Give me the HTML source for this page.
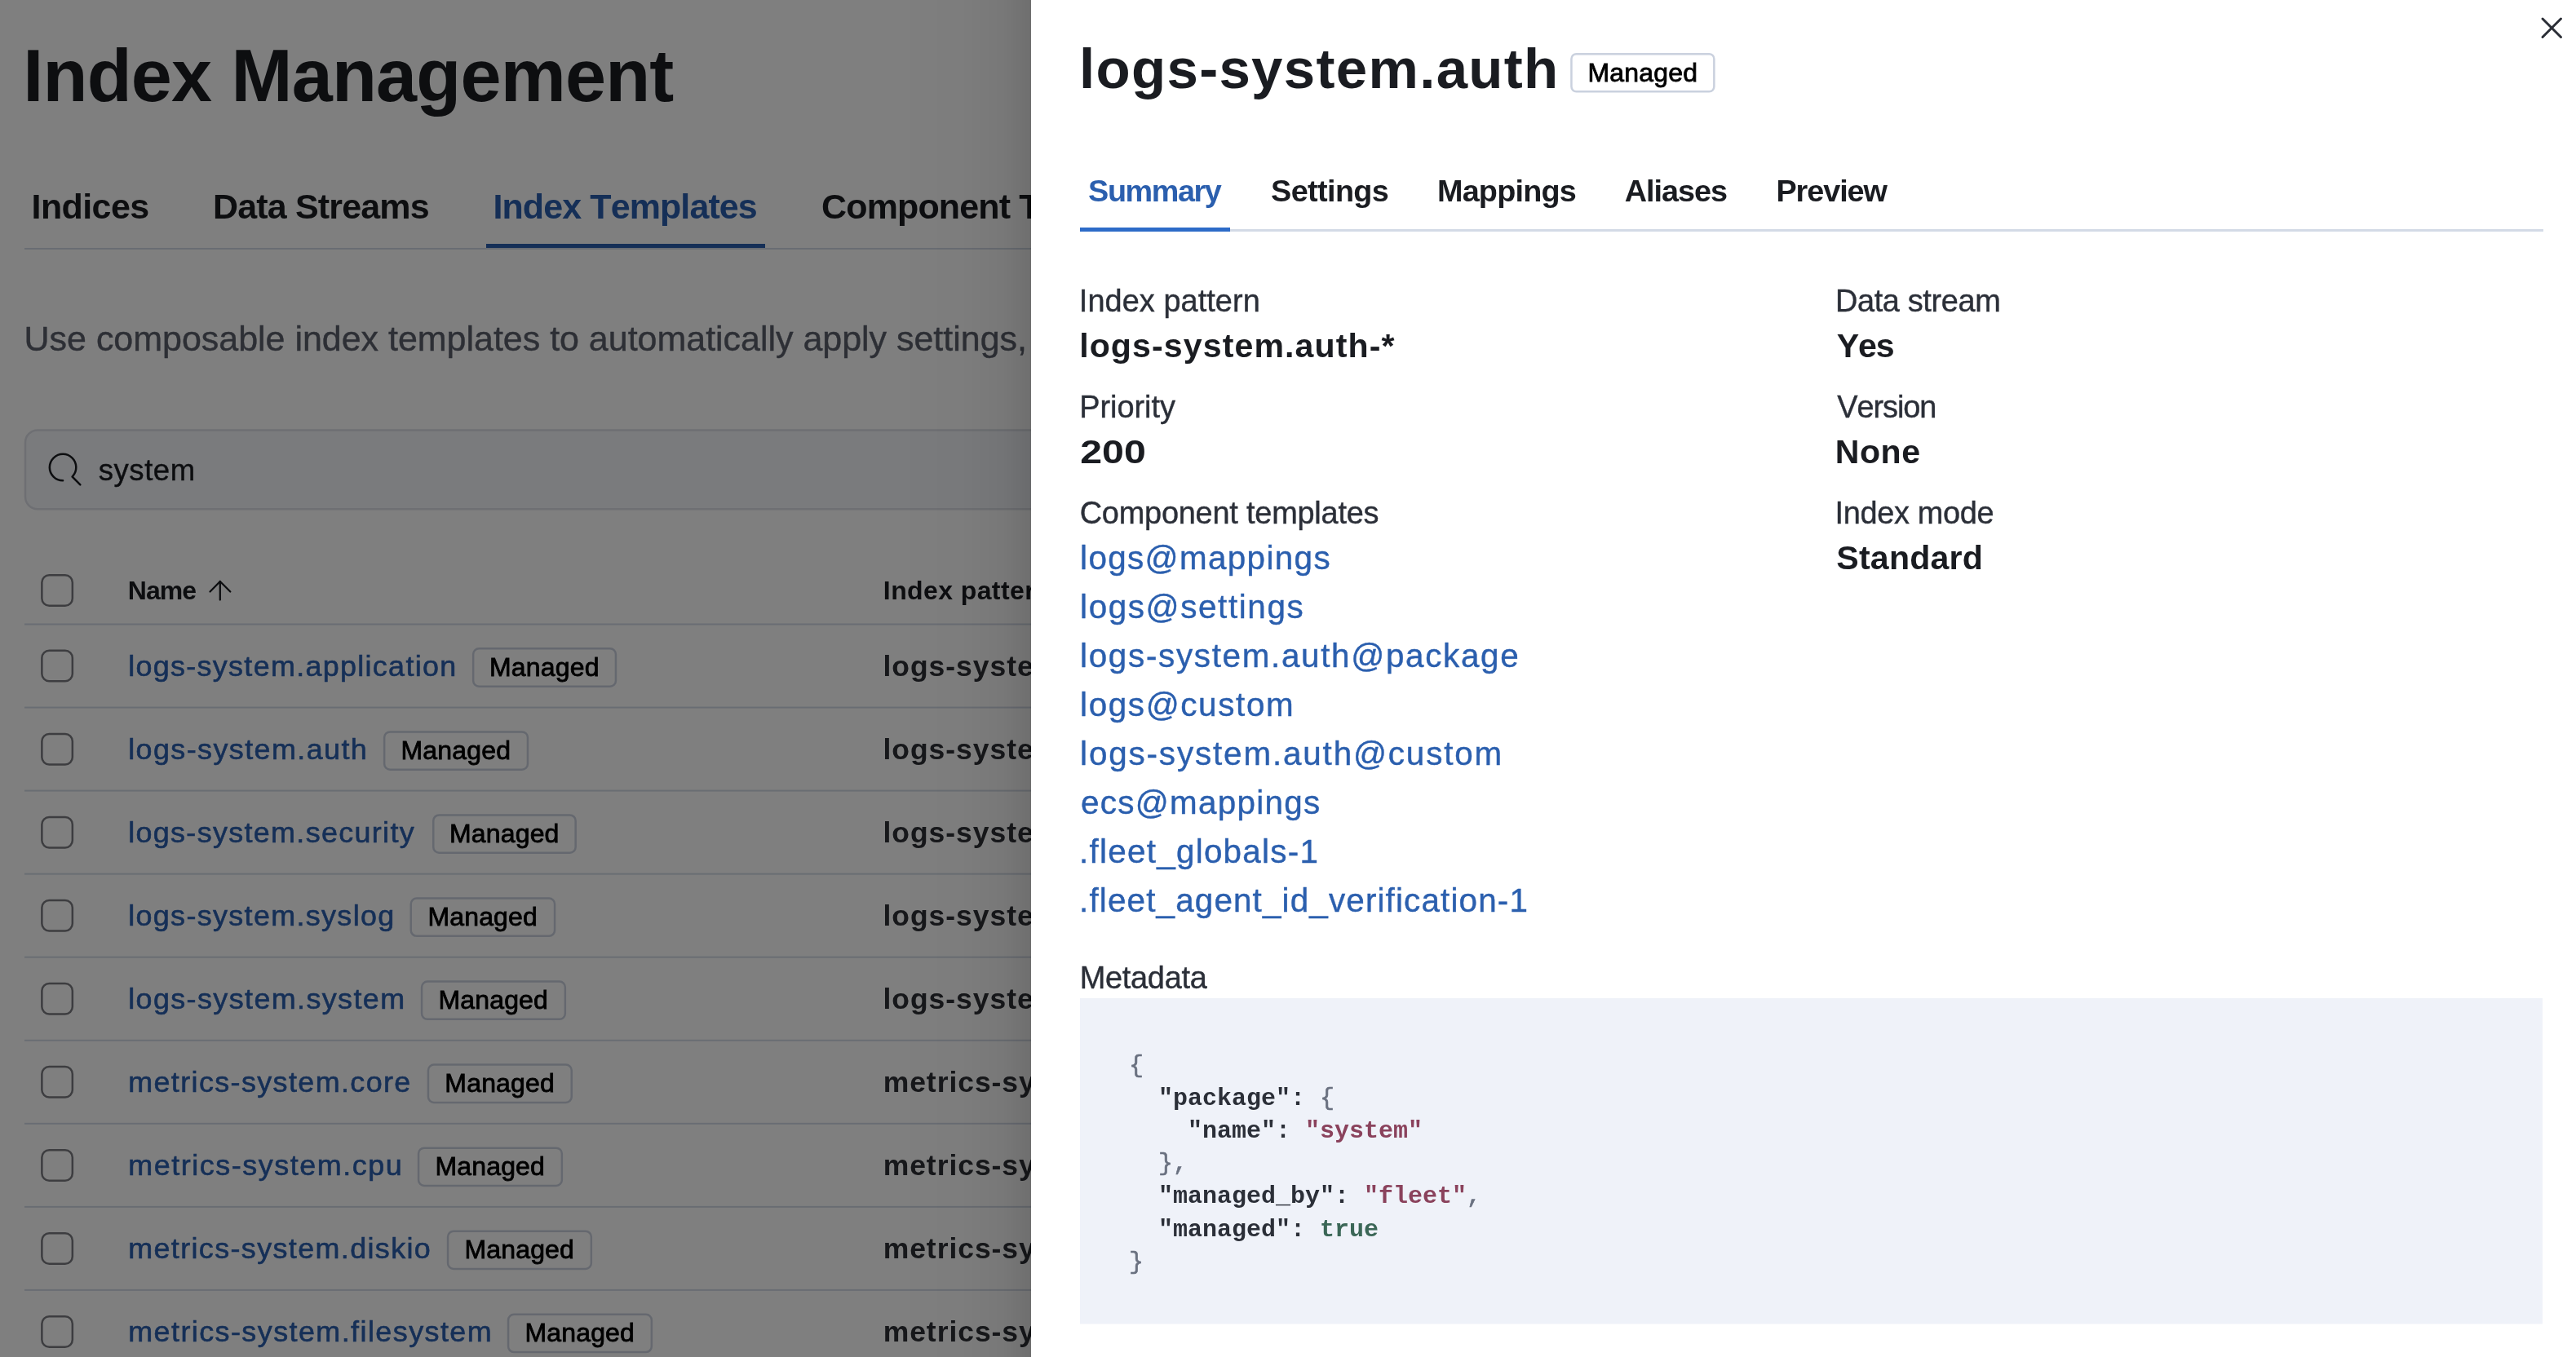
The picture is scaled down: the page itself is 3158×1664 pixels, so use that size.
<!DOCTYPE html>
<html><head><meta charset="utf-8"><title>Index Management</title>
<style>
html,body{margin:0;padding:0}
body{width:3158px;height:1664px;overflow:hidden;position:relative;background:#fff;font-family:"Liberation Sans",sans-serif}
.layer{position:absolute;left:0;top:0;width:3158px;height:1664px}
#overlay{background:rgba(0,0,0,0.5)}
#shadow{left:1100px;width:164px;background:linear-gradient(to right,rgba(0,0,0,0) 0%,rgba(0,0,0,0.02) 50%,rgba(0,0,0,0.06) 80%,rgba(0,0,0,0.13) 100%)}
#flyout{position:absolute;left:1264px;top:0;width:1894px;height:1664px;background:#fff;overflow:hidden}
#flyout svg{position:absolute;left:-1264px;top:0}
svg{will-change:transform}
svg text{font-kerning:none}
</style></head><body>
<main class="layer" id="page"><svg width="3158" height="1664"><rect x="30" y="304" width="1300" height="2" fill="#d3dae6"/><rect x="596" y="299" width="342" height="5" fill="#2b5fae"/><rect x="31" y="527.5" width="1400" height="96.7" rx="15" fill="#f4f6fa" stroke="#dcdfe6" stroke-width="2.5"/><path transform="translate(59.6,555.6) scale(2.5)" fill="#1a1c21" d="M11.271 11.978l3.872 3.873a.502.502 0 00.708 0 .502.502 0 000-.708l-3.565-3.564c2.38-2.747 2.267-6.923-.342-9.532-2.73-2.730-7.170-2.730-9.898 0-2.728 2.729-2.728 7.170 0 9.900a6.955 6.955 0 004.947 2.050.5.5 0 000-1 5.960 5.960 0 01-4.240-1.757 6.010 6.010 0 010-8.486 6.004 6.004 0 018.484 0 6.010 6.010 0 010 8.486.5.5 0 000 .707z"/><rect x="51.35" y="705.35" width="37.5" height="37.5" rx="9" fill="#fff" stroke="#7a7b80" stroke-width="2.5"/><g fill="none" stroke="#1a1c21" stroke-width="2.3" stroke-linecap="round" stroke-linejoin="round"><path d="M 269.8 713 L 269.8 735.5"/><path d="M 257.5 725.5 L 269.8 713 L 282.3 725.5"/></g><rect x="30" y="764.50" width="1300" height="2" fill="#d3dae6"/><rect x="30" y="866.55" width="1300" height="2" fill="#d3dae6"/><rect x="30" y="968.60" width="1300" height="2" fill="#d3dae6"/><rect x="30" y="1070.65" width="1300" height="2" fill="#d3dae6"/><rect x="30" y="1172.70" width="1300" height="2" fill="#d3dae6"/><rect x="30" y="1274.75" width="1300" height="2" fill="#d3dae6"/><rect x="30" y="1376.80" width="1300" height="2" fill="#d3dae6"/><rect x="30" y="1478.85" width="1300" height="2" fill="#d3dae6"/><rect x="30" y="1580.90" width="1300" height="2" fill="#d3dae6"/><rect x="580.15" y="795.35" width="174.80" height="46.30" rx="7" fill="#fff" stroke="#cad1de" stroke-width="2.5"/><rect x="51.35" y="797.85" width="37.5" height="37.5" rx="9" fill="#fff" stroke="#7a7b80" stroke-width="2.5"/><rect x="471.15" y="897.40" width="175.80" height="46.30" rx="7" fill="#fff" stroke="#cad1de" stroke-width="2.5"/><rect x="51.35" y="899.90" width="37.5" height="37.5" rx="9" fill="#fff" stroke="#7a7b80" stroke-width="2.5"/><rect x="531.25" y="999.45" width="174.40" height="46.30" rx="7" fill="#fff" stroke="#cad1de" stroke-width="2.5"/><rect x="51.35" y="1001.95" width="37.5" height="37.5" rx="9" fill="#fff" stroke="#7a7b80" stroke-width="2.5"/><rect x="503.75" y="1101.50" width="176.30" height="46.30" rx="7" fill="#fff" stroke="#cad1de" stroke-width="2.5"/><rect x="51.35" y="1104.00" width="37.5" height="37.5" rx="9" fill="#fff" stroke="#7a7b80" stroke-width="2.5"/><rect x="517.05" y="1203.55" width="175.80" height="46.30" rx="7" fill="#fff" stroke="#cad1de" stroke-width="2.5"/><rect x="51.35" y="1206.05" width="37.5" height="37.5" rx="9" fill="#fff" stroke="#7a7b80" stroke-width="2.5"/><rect x="524.95" y="1305.60" width="175.80" height="46.30" rx="7" fill="#fff" stroke="#cad1de" stroke-width="2.5"/><rect x="51.35" y="1308.10" width="37.5" height="37.5" rx="9" fill="#fff" stroke="#7a7b80" stroke-width="2.5"/><rect x="513.05" y="1407.65" width="175.80" height="46.30" rx="7" fill="#fff" stroke="#cad1de" stroke-width="2.5"/><rect x="51.35" y="1410.15" width="37.5" height="37.5" rx="9" fill="#fff" stroke="#7a7b80" stroke-width="2.5"/><rect x="549.05" y="1509.70" width="175.80" height="46.30" rx="7" fill="#fff" stroke="#cad1de" stroke-width="2.5"/><rect x="51.35" y="1512.20" width="37.5" height="37.5" rx="9" fill="#fff" stroke="#7a7b80" stroke-width="2.5"/><rect x="623.05" y="1611.75" width="175.80" height="46.30" rx="7" fill="#fff" stroke="#cad1de" stroke-width="2.5"/><rect x="51.35" y="1614.25" width="37.5" height="37.5" rx="9" fill="#fff" stroke="#7a7b80" stroke-width="2.5"/><text x="28.28" y="124.00" fill="#1a1c21" style="font-family:'Liberation Sans',sans-serif;font-size:90px;font-weight:700;letter-spacing:-0.810px">Index Management</text><text x="38.62" y="268.00" fill="#1a1c21" style="font-family:'Liberation Sans',sans-serif;font-size:43px;font-weight:700;letter-spacing:-0.605px">Indices</text><text x="261.12" y="268.00" fill="#1a1c21" style="font-family:'Liberation Sans',sans-serif;font-size:43px;font-weight:700;letter-spacing:-0.856px">Data Streams</text><text x="604.42" y="268.00" fill="#2b5fae" style="font-family:'Liberation Sans',sans-serif;font-size:43px;font-weight:700;letter-spacing:-0.900px">Index Templates</text><text x="1007.04" y="268.00" fill="#1a1c21" style="font-family:'Liberation Sans',sans-serif;font-size:43px;font-weight:700;letter-spacing:-0.850px">Component Templates</text><text x="29.58" y="430.10" fill="#5a5e6a" stroke="#5a5e6a" stroke-width="0.4" style="font-family:'Liberation Sans',sans-serif;font-size:43px;font-weight:400;letter-spacing:-0.025px">Use composable index templates to automatically apply settings,</text><text x="120.78" y="588.90" fill="#1a1c21" stroke="#1a1c21" stroke-width="0.4" style="font-family:'Liberation Sans',sans-serif;font-size:36.5px;font-weight:400;letter-spacing:0.545px">system</text><text x="156.76" y="735.10" fill="#1a1c21" style="font-family:'Liberation Sans',sans-serif;font-size:32px;font-weight:700;letter-spacing:-0.941px">Name</text><text x="1082.86" y="735.00" fill="#1a1c21" style="font-family:'Liberation Sans',sans-serif;font-size:32px;font-weight:700;letter-spacing:0.400px">Index pattern</text><text x="157.18" y="829.00" fill="#2b5fae" stroke="#2b5fae" stroke-width="0.6" style="font-family:'Liberation Sans',sans-serif;font-size:35.9px;font-weight:400;letter-spacing:1.319px">logs-system.application</text><text x="1082.52" y="829.00" fill="#2e3036" style="font-family:'Liberation Sans',sans-serif;font-size:35.5px;font-weight:700;letter-spacing:0.950px">logs-system.application-*</text><text x="157.18" y="931.05" fill="#2b5fae" stroke="#2b5fae" stroke-width="0.6" style="font-family:'Liberation Sans',sans-serif;font-size:35.9px;font-weight:400;letter-spacing:1.420px">logs-system.auth</text><text x="1082.52" y="931.05" fill="#2e3036" style="font-family:'Liberation Sans',sans-serif;font-size:35.5px;font-weight:700;letter-spacing:0.950px">logs-system.auth-*</text><text x="157.18" y="1033.10" fill="#2b5fae" stroke="#2b5fae" stroke-width="0.6" style="font-family:'Liberation Sans',sans-serif;font-size:35.9px;font-weight:400;letter-spacing:1.338px">logs-system.security</text><text x="1082.52" y="1033.10" fill="#2e3036" style="font-family:'Liberation Sans',sans-serif;font-size:35.5px;font-weight:700;letter-spacing:0.950px">logs-system.security-*</text><text x="157.18" y="1135.15" fill="#2b5fae" stroke="#2b5fae" stroke-width="0.6" style="font-family:'Liberation Sans',sans-serif;font-size:35.9px;font-weight:400;letter-spacing:1.347px">logs-system.syslog</text><text x="1082.52" y="1135.15" fill="#2e3036" style="font-family:'Liberation Sans',sans-serif;font-size:35.5px;font-weight:700;letter-spacing:0.950px">logs-system.syslog-*</text><text x="157.18" y="1237.20" fill="#2b5fae" stroke="#2b5fae" stroke-width="0.6" style="font-family:'Liberation Sans',sans-serif;font-size:35.9px;font-weight:400;letter-spacing:1.401px">logs-system.system</text><text x="1082.52" y="1237.20" fill="#2e3036" style="font-family:'Liberation Sans',sans-serif;font-size:35.5px;font-weight:700;letter-spacing:0.950px">logs-system.system-*</text><text x="157.22" y="1339.25" fill="#2b5fae" stroke="#2b5fae" stroke-width="0.6" style="font-family:'Liberation Sans',sans-serif;font-size:35.9px;font-weight:400;letter-spacing:1.391px">metrics-system.core</text><text x="1082.66" y="1339.25" fill="#2e3036" style="font-family:'Liberation Sans',sans-serif;font-size:35.5px;font-weight:700;letter-spacing:0.950px">metrics-system.core-*</text><text x="157.22" y="1441.30" fill="#2b5fae" stroke="#2b5fae" stroke-width="0.6" style="font-family:'Liberation Sans',sans-serif;font-size:35.9px;font-weight:400;letter-spacing:1.552px">metrics-system.cpu</text><text x="1082.66" y="1441.30" fill="#2e3036" style="font-family:'Liberation Sans',sans-serif;font-size:35.5px;font-weight:700;letter-spacing:0.950px">metrics-system.cpu-*</text><text x="157.22" y="1543.35" fill="#2b5fae" stroke="#2b5fae" stroke-width="0.6" style="font-family:'Liberation Sans',sans-serif;font-size:35.9px;font-weight:400;letter-spacing:1.380px">metrics-system.diskio</text><text x="1082.66" y="1543.35" fill="#2e3036" style="font-family:'Liberation Sans',sans-serif;font-size:35.5px;font-weight:700;letter-spacing:0.950px">metrics-system.diskio-*</text><text x="157.22" y="1645.40" fill="#2b5fae" stroke="#2b5fae" stroke-width="0.6" style="font-family:'Liberation Sans',sans-serif;font-size:35.9px;font-weight:400;letter-spacing:1.444px">metrics-system.filesystem</text><text x="1082.66" y="1645.40" fill="#2e3036" style="font-family:'Liberation Sans',sans-serif;font-size:35.5px;font-weight:700;letter-spacing:0.950px">metrics-system.filesystem-*</text><text x="600.02" y="828.90" fill="#000" stroke="#000" stroke-width="0.8" style="font-family:'Liberation Sans',sans-serif;font-size:32px;font-weight:400;letter-spacing:0.175px">Managed</text><text x="491.52" y="930.95" fill="#000" stroke="#000" stroke-width="0.8" style="font-family:'Liberation Sans',sans-serif;font-size:32px;font-weight:400;letter-spacing:0.175px">Managed</text><text x="550.93" y="1033.00" fill="#000" stroke="#000" stroke-width="0.8" style="font-family:'Liberation Sans',sans-serif;font-size:32px;font-weight:400;letter-spacing:0.175px">Managed</text><text x="524.38" y="1135.05" fill="#000" stroke="#000" stroke-width="0.8" style="font-family:'Liberation Sans',sans-serif;font-size:32px;font-weight:400;letter-spacing:0.175px">Managed</text><text x="537.42" y="1237.10" fill="#000" stroke="#000" stroke-width="0.8" style="font-family:'Liberation Sans',sans-serif;font-size:32px;font-weight:400;letter-spacing:0.175px">Managed</text><text x="545.33" y="1339.15" fill="#000" stroke="#000" stroke-width="0.8" style="font-family:'Liberation Sans',sans-serif;font-size:32px;font-weight:400;letter-spacing:0.175px">Managed</text><text x="533.42" y="1441.20" fill="#000" stroke="#000" stroke-width="0.8" style="font-family:'Liberation Sans',sans-serif;font-size:32px;font-weight:400;letter-spacing:0.175px">Managed</text><text x="569.42" y="1543.25" fill="#000" stroke="#000" stroke-width="0.8" style="font-family:'Liberation Sans',sans-serif;font-size:32px;font-weight:400;letter-spacing:0.175px">Managed</text><text x="643.42" y="1645.30" fill="#000" stroke="#000" stroke-width="0.8" style="font-family:'Liberation Sans',sans-serif;font-size:32px;font-weight:400;letter-spacing:0.175px">Managed</text></svg></main>
<div class="layer" id="overlay"></div>
<div class="layer" id="shadow"></div>
<aside id="flyout"><svg width="3158" height="1664"><rect x="1926.45" y="66.15" width="174.9" height="46.2" rx="6" fill="#fff" stroke="#cad1de" stroke-width="2.5"/><g stroke="#2b2e36" stroke-width="3" stroke-linecap="round"><path d="M 3117 23 L 3139.5 45.5"/><path d="M 3139.5 23 L 3117 45.5"/></g><rect x="1324" y="281" width="1794" height="3" fill="#d3dae6"/><rect x="1324" y="279" width="184" height="5" fill="#2d6bc8"/><rect x="1324" y="1224" width="1793" height="399.5" fill="#eff2f9"/><text x="1323.03" y="107.80" fill="#1a1c21" style="font-family:'Liberation Sans',sans-serif;font-size:69px;font-weight:700;letter-spacing:1.319px">logs-system.auth</text><text x="1946.47" y="100.00" fill="#000" stroke="#000" stroke-width="0.8" style="font-family:'Liberation Sans',sans-serif;font-size:32px;font-weight:400;letter-spacing:0.175px">Managed</text><text x="1334.11" y="247.00" fill="#2b5fae" style="font-family:'Liberation Sans',sans-serif;font-size:37.8px;font-weight:700;letter-spacing:-1.431px">Summary</text><text x="1558.11" y="247.00" fill="#1a1c21" style="font-family:'Liberation Sans',sans-serif;font-size:37.8px;font-weight:700;letter-spacing:-0.625px">Settings</text><text x="1761.97" y="247.00" fill="#1a1c21" style="font-family:'Liberation Sans',sans-serif;font-size:37.8px;font-weight:700;letter-spacing:-0.802px">Mappings</text><text x="1991.66" y="247.00" fill="#1a1c21" style="font-family:'Liberation Sans',sans-serif;font-size:37.8px;font-weight:700;letter-spacing:-1.000px">Aliases</text><text x="2177.47" y="247.00" fill="#1a1c21" style="font-family:'Liberation Sans',sans-serif;font-size:37.8px;font-weight:700;letter-spacing:-1.073px">Preview</text><text x="1322.80" y="382.40" fill="#2b2f38" stroke="#2b2f38" stroke-width="0.4" style="font-family:'Liberation Sans',sans-serif;font-size:37.9px;font-weight:400;letter-spacing:0.060px">Index pattern</text><text x="1323.13" y="438.30" fill="#1a1c21" style="font-family:'Liberation Sans',sans-serif;font-size:41.1px;font-weight:700;letter-spacing:1.101px">logs-system.auth-*</text><text x="1323.19" y="512.40" fill="#2b2f38" stroke="#2b2f38" stroke-width="0.4" style="font-family:'Liberation Sans',sans-serif;font-size:37.9px;font-weight:400;letter-spacing:-0.019px">Priority</text><text transform="translate(1324.23,0) scale(1.1747,1)" x="0" y="568.10" fill="#1a1c21" style="font-family:'Liberation Sans',sans-serif;font-size:41.1px;font-weight:700">200</text><text x="1323.68" y="641.90" fill="#2b2f38" stroke="#2b2f38" stroke-width="0.4" style="font-family:'Liberation Sans',sans-serif;font-size:37.9px;font-weight:400;letter-spacing:-0.211px">Component templates</text><text x="2249.89" y="382.40" fill="#2b2f38" stroke="#2b2f38" stroke-width="0.4" style="font-family:'Liberation Sans',sans-serif;font-size:37.9px;font-weight:400;letter-spacing:-0.341px">Data stream</text><text x="2251.80" y="438.30" fill="#1a1c21" style="font-family:'Liberation Sans',sans-serif;font-size:41.1px;font-weight:700;letter-spacing:-1.120px">Yes</text><text x="2252.33" y="512.40" fill="#2b2f38" stroke="#2b2f38" stroke-width="0.4" style="font-family:'Liberation Sans',sans-serif;font-size:37.9px;font-weight:400;letter-spacing:-1.063px">Version</text><text x="2249.75" y="568.10" fill="#1a1c21" style="font-family:'Liberation Sans',sans-serif;font-size:41.1px;font-weight:700;letter-spacing:0.501px">None</text><text x="2249.50" y="641.90" fill="#2b2f38" stroke="#2b2f38" stroke-width="0.4" style="font-family:'Liberation Sans',sans-serif;font-size:37.9px;font-weight:400;letter-spacing:-0.319px">Index mode</text><text x="2251.32" y="698.10" fill="#1a1c21" style="font-family:'Liberation Sans',sans-serif;font-size:41.1px;font-weight:700;letter-spacing:0.210px">Standard</text><text x="1324.08" y="698.10" fill="#2b5fae" stroke="#2b5fae" stroke-width="0.4" style="font-family:'Liberation Sans',sans-serif;font-size:40.4px;font-weight:400;letter-spacing:1.357px">logs@mappings</text><text x="1324.08" y="758.10" fill="#2b5fae" stroke="#2b5fae" stroke-width="0.4" style="font-family:'Liberation Sans',sans-serif;font-size:40.4px;font-weight:400;letter-spacing:1.611px">logs@settings</text><text x="1324.08" y="818.10" fill="#2b5fae" stroke="#2b5fae" stroke-width="0.4" style="font-family:'Liberation Sans',sans-serif;font-size:40.4px;font-weight:400;letter-spacing:1.678px">logs-system.auth@package</text><text x="1324.08" y="878.10" fill="#2b5fae" stroke="#2b5fae" stroke-width="0.4" style="font-family:'Liberation Sans',sans-serif;font-size:40.4px;font-weight:400;letter-spacing:1.625px">logs@custom</text><text x="1324.08" y="938.10" fill="#2b5fae" stroke="#2b5fae" stroke-width="0.4" style="font-family:'Liberation Sans',sans-serif;font-size:40.4px;font-weight:400;letter-spacing:1.850px">logs-system.auth@custom</text><text x="1325.08" y="998.10" fill="#2b5fae" stroke="#2b5fae" stroke-width="0.4" style="font-family:'Liberation Sans',sans-serif;font-size:40.4px;font-weight:400;letter-spacing:1.275px">ecs@mappings</text><text x="1323.11" y="1058.10" fill="#2b5fae" stroke="#2b5fae" stroke-width="0.4" style="font-family:'Liberation Sans',sans-serif;font-size:40.4px;font-weight:400;letter-spacing:1.257px">.fleet_globals-1</text><text x="1323.11" y="1118.10" fill="#2b5fae" stroke="#2b5fae" stroke-width="0.4" style="font-family:'Liberation Sans',sans-serif;font-size:40.4px;font-weight:400;letter-spacing:1.148px">.fleet_agent_id_verification-1</text><text x="1323.79" y="1211.80" fill="#2b2f38" stroke="#2b2f38" stroke-width="0.4" style="font-family:'Liberation Sans',sans-serif;font-size:37.9px;font-weight:400;letter-spacing:-0.288px">Metadata</text><text x="1384.00" y="1314.60" fill="#6a7180" stroke="#6a7180" stroke-width="0.6" style="font-family:'Liberation Mono',monospace;font-size:30px;font-weight:400;white-space:pre">{</text><text x="1420.00" y="1354.80" fill="#2b2f38" style="font-family:'Liberation Mono',monospace;font-size:30px;font-weight:700;white-space:pre">&quot;package&quot;</text><text x="1582.00" y="1354.80" fill="#2b2f38" style="font-family:'Liberation Mono',monospace;font-size:30px;font-weight:700;white-space:pre">: </text><text x="1618.00" y="1354.80" fill="#6a7180" stroke="#6a7180" stroke-width="0.6" style="font-family:'Liberation Mono',monospace;font-size:30px;font-weight:400;white-space:pre">{</text><text x="1456.00" y="1395.00" fill="#2b2f38" style="font-family:'Liberation Mono',monospace;font-size:30px;font-weight:700;white-space:pre">&quot;name&quot;</text><text x="1564.00" y="1395.00" fill="#2b2f38" style="font-family:'Liberation Mono',monospace;font-size:30px;font-weight:700;white-space:pre">: </text><text x="1600.00" y="1395.00" fill="#8a425c" style="font-family:'Liberation Mono',monospace;font-size:30px;font-weight:700;white-space:pre">&quot;system&quot;</text><text x="1420.00" y="1435.20" fill="#6a7180" stroke="#6a7180" stroke-width="0.6" style="font-family:'Liberation Mono',monospace;font-size:30px;font-weight:400;white-space:pre">}</text><text x="1438.00" y="1435.20" fill="#6a7180" stroke="#6a7180" stroke-width="0.6" style="font-family:'Liberation Mono',monospace;font-size:30px;font-weight:400;white-space:pre">,</text><text x="1420.00" y="1475.40" fill="#2b2f38" style="font-family:'Liberation Mono',monospace;font-size:30px;font-weight:700;white-space:pre">&quot;managed_by&quot;</text><text x="1636.00" y="1475.40" fill="#2b2f38" style="font-family:'Liberation Mono',monospace;font-size:30px;font-weight:700;white-space:pre">: </text><text x="1672.00" y="1475.40" fill="#8a425c" style="font-family:'Liberation Mono',monospace;font-size:30px;font-weight:700;white-space:pre">&quot;fleet&quot;</text><text x="1798.00" y="1475.40" fill="#6a7180" stroke="#6a7180" stroke-width="0.6" style="font-family:'Liberation Mono',monospace;font-size:30px;font-weight:400;white-space:pre">,</text><text x="1420.00" y="1515.60" fill="#2b2f38" style="font-family:'Liberation Mono',monospace;font-size:30px;font-weight:700;white-space:pre">&quot;managed&quot;</text><text x="1582.00" y="1515.60" fill="#2b2f38" style="font-family:'Liberation Mono',monospace;font-size:30px;font-weight:700;white-space:pre">: </text><text x="1618.00" y="1515.60" fill="#3b6757" style="font-family:'Liberation Mono',monospace;font-size:30px;font-weight:700;white-space:pre">true</text><text x="1384.00" y="1555.80" fill="#6a7180" stroke="#6a7180" stroke-width="0.6" style="font-family:'Liberation Mono',monospace;font-size:30px;font-weight:400;white-space:pre">}</text></svg></aside>
</body></html>
